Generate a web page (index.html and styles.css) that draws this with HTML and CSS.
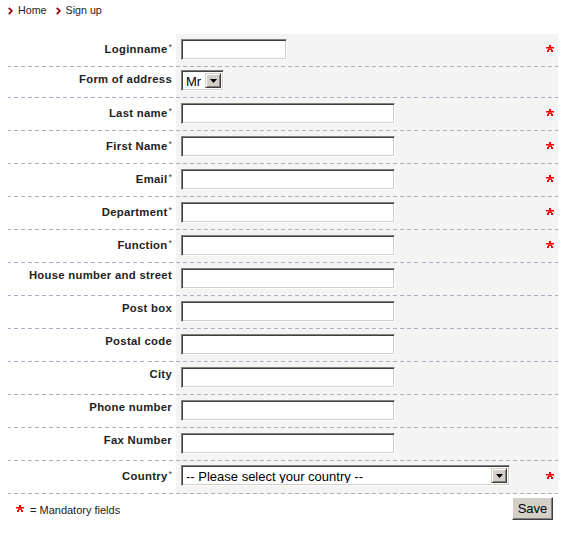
FILE: index.html
```html
<!DOCTYPE html>
<html lang="en">
<head>
<meta charset="utf-8">
<title>Sign up</title>
<link rel="stylesheet" href="styles.css">
</head>
<body>
<div class="page">
  <nav class="crumbs">
    <span class="crumb"><svg class="chev" width="5" height="8" viewBox="0 0 5 8"><path d="M0.8 0.8 L3.8 4 L0.8 7.2" fill="none" stroke="#9b0000" stroke-width="1.8"/></svg>Home</span>
    <span class="crumb"><svg class="chev" width="5" height="8" viewBox="0 0 5 8"><path d="M0.8 0.8 L3.8 4 L0.8 7.2" fill="none" stroke="#9b0000" stroke-width="1.8"/></svg>Sign up</span>
  </nav>

  <form class="form">
    <div class="row">
      <label class="label req">Loginname<span class="sup">*</span></label>
      <div class="field"><input class="text w-short" type="text"></div>
      <span class="star"><svg width="8" height="7" viewBox="0 0 8 7"><g fill="#ff0000"><rect x="3" y="0" width="2" height="2"/><rect x="0" y="2" width="8" height="1.5"/><rect x="2" y="3.5" width="4" height="1.5"/><rect x="1" y="5" width="2" height="2"/><rect x="5" y="5" width="2" height="2"/></g></svg></span>
    </div>
    <div class="row row-select">
      <label class="label">Form of address</label>
      <div class="field"><div class="select w-mr"><span class="sel-text">Mr</span><span class="sel-btn"><svg width="7" height="4" viewBox="0 0 7 4"><path d="M0 0 H7 L3.5 4 Z" fill="#000"/></svg></span></div></div>
      <span class="star"></span>
    </div>
    <div class="row">
      <label class="label req">Last name<span class="sup">*</span></label>
      <div class="field"><input class="text" type="text"></div>
      <span class="star"><svg width="8" height="7" viewBox="0 0 8 7"><g fill="#ff0000"><rect x="3" y="0" width="2" height="2"/><rect x="0" y="2" width="8" height="1.5"/><rect x="2" y="3.5" width="4" height="1.5"/><rect x="1" y="5" width="2" height="2"/><rect x="5" y="5" width="2" height="2"/></g></svg></span>
    </div>
    <div class="row">
      <label class="label req">First Name<span class="sup">*</span></label>
      <div class="field"><input class="text" type="text"></div>
      <span class="star"><svg width="8" height="7" viewBox="0 0 8 7"><g fill="#ff0000"><rect x="3" y="0" width="2" height="2"/><rect x="0" y="2" width="8" height="1.5"/><rect x="2" y="3.5" width="4" height="1.5"/><rect x="1" y="5" width="2" height="2"/><rect x="5" y="5" width="2" height="2"/></g></svg></span>
    </div>
    <div class="row">
      <label class="label req">Email<span class="sup">*</span></label>
      <div class="field"><input class="text" type="text"></div>
      <span class="star"><svg width="8" height="7" viewBox="0 0 8 7"><g fill="#ff0000"><rect x="3" y="0" width="2" height="2"/><rect x="0" y="2" width="8" height="1.5"/><rect x="2" y="3.5" width="4" height="1.5"/><rect x="1" y="5" width="2" height="2"/><rect x="5" y="5" width="2" height="2"/></g></svg></span>
    </div>
    <div class="row">
      <label class="label req">Department<span class="sup">*</span></label>
      <div class="field"><input class="text" type="text"></div>
      <span class="star"><svg width="8" height="7" viewBox="0 0 8 7"><g fill="#ff0000"><rect x="3" y="0" width="2" height="2"/><rect x="0" y="2" width="8" height="1.5"/><rect x="2" y="3.5" width="4" height="1.5"/><rect x="1" y="5" width="2" height="2"/><rect x="5" y="5" width="2" height="2"/></g></svg></span>
    </div>
    <div class="row">
      <label class="label req">Function<span class="sup">*</span></label>
      <div class="field"><input class="text" type="text"></div>
      <span class="star"><svg width="8" height="7" viewBox="0 0 8 7"><g fill="#ff0000"><rect x="3" y="0" width="2" height="2"/><rect x="0" y="2" width="8" height="1.5"/><rect x="2" y="3.5" width="4" height="1.5"/><rect x="1" y="5" width="2" height="2"/><rect x="5" y="5" width="2" height="2"/></g></svg></span>
    </div>
    <div class="row">
      <label class="label">House number and street</label>
      <div class="field"><input class="text" type="text"></div>
      <span class="star"></span>
    </div>
    <div class="row">
      <label class="label">Post box</label>
      <div class="field"><input class="text" type="text"></div>
      <span class="star"></span>
    </div>
    <div class="row">
      <label class="label">Postal code</label>
      <div class="field"><input class="text" type="text"></div>
      <span class="star"></span>
    </div>
    <div class="row">
      <label class="label">City</label>
      <div class="field"><input class="text" type="text"></div>
      <span class="star"></span>
    </div>
    <div class="row">
      <label class="label">Phone number</label>
      <div class="field"><input class="text" type="text"></div>
      <span class="star"></span>
    </div>
    <div class="row">
      <label class="label">Fax Number</label>
      <div class="field"><input class="text" type="text"></div>
      <span class="star"></span>
    </div>
    <div class="row row-country">
      <label class="label req">Country<span class="sup">*</span></label>
      <div class="field"><div class="select w-country"><span class="sel-text">-- Please select your country --</span><span class="sel-btn"><svg width="7" height="4" viewBox="0 0 7 4"><path d="M0 0 H7 L3.5 4 Z" fill="#000"/></svg></span></div></div>
      <span class="star"><svg width="8" height="7" viewBox="0 0 8 7"><g fill="#ff0000"><rect x="3" y="0" width="2" height="2"/><rect x="0" y="2" width="8" height="1.5"/><rect x="2" y="3.5" width="4" height="1.5"/><rect x="1" y="5" width="2" height="2"/><rect x="5" y="5" width="2" height="2"/></g></svg></span>
    </div>

    <div class="footer">
      <div class="legend"><svg class="legend-star" width="8" height="7" viewBox="0 0 8 7"><g fill="#ff0000"><rect x="3" y="0" width="2" height="2"/><rect x="0" y="2" width="8" height="1.5"/><rect x="2" y="3.5" width="4" height="1.5"/><rect x="1" y="5" width="2" height="2"/><rect x="5" y="5" width="2" height="2"/></g></svg><span>= Mandatory fields</span></div>
      <button class="btn" type="button">Save</button>
    </div>
  </form>
</div>
</body>
</html>
```

FILE: styles.css
```css
* { box-sizing: border-box; }

body {
  margin: 0;
  background: #ffffff;
  font-family: "Liberation Sans", Arial, sans-serif;
  font-size: 11px;
  color: #222222;
}

.page {
  padding: 4px 12px 0 8px;
}

.crumbs {
  display: flex;
  gap: 9px;
  line-height: 13px;
  height: 13px;
  margin-bottom: 17px;
  font-size: 10.7px;
}

.crumb {
  display: flex;
  align-items: center;
  gap: 5px;
}

.chev { display: block; margin-top: 1px; }

.form {
  display: flex;
  flex-direction: column;
}

.row {
  display: grid;
  grid-template-columns: 168px 1fr auto;
  height: 33px;
  border-bottom: 1px solid transparent;
  border-image: repeating-linear-gradient(to right, #aeaec4 0 4px, transparent 4px 7px) 1;
  background: linear-gradient(to right, #ffffff 168px, #f4f4f4 168px);
}

.row-select { height: 31px; }

.label {
  font-weight: bold;
  font-size: 11.3px;
  letter-spacing: 0.3px;
  text-align: right;
  padding: 6px 4px 0 0;
  line-height: 13px;
  color: #222222;
}

.label.req { padding-top: 9px; }

.sup {
  font-weight: normal;
  font-size: 9px;
  letter-spacing: 0;
  vertical-align: 3px;
  line-height: 0;
  margin-left: 1px;
  color: #444444;
}

.field {
  padding: 5px 0 0 5px;
}

.row-select .field { padding-top: 3px; }
.row-country .field { padding-top: 4px; }

.star {
  align-self: center;
  width: 12px;
  padding-right: 4px;
  margin-top: -3px;
  display: flex;
  justify-content: flex-end;
}
.star svg { display: block; }

.text {
  display: block;
  width: 214px;
  height: 21px;
  margin: 0;
  padding: 0 3px;
  background: #ffffff;
  border: 1px solid;
  border-color: #808080 #ffffff #ffffff #808080;
  box-shadow: inset 1px 1px 0 #404040, inset -1px -1px 0 #d4d0c8;
  font-family: "Liberation Sans", Arial, sans-serif;
  font-size: 13px;
  outline: none;
}

.w-short { width: 106px; }

.select {
  display: flex;
  align-items: stretch;
  height: 21px;
  background: #ffffff;
  border: 1px solid;
  border-color: #808080 #ffffff #ffffff #808080;
  box-shadow: inset 1px 1px 0 #404040, inset -1px -1px 0 #d4d0c8;
  padding: 2px;
  font-family: "Liberation Sans", Arial, sans-serif;
  font-size: 13px;
  color: #000000;
}

.w-mr { width: 43px; }
.w-country { width: 329px; }

.sel-text {
  flex: 1;
  line-height: 17px;
  padding-left: 2px;
  white-space: nowrap;
  overflow: hidden;
}

.sel-btn {
  width: 16px;
  display: flex;
  align-items: center;
  justify-content: center;
  background: #d4d0c8;
  border: 1px solid;
  border-color: #d4d0c8 #404040 #404040 #d4d0c8;
  box-shadow: inset 1px 1px 0 #ffffff, inset -1px -1px 0 #808080;
}
.sel-btn svg { display: block; }

.footer {
  display: flex;
  justify-content: space-between;
  align-items: flex-start;
  padding: 3px 5px 0 0;
}

.legend {
  display: flex;
  align-items: center;
  gap: 6px;
  padding: 7px 0 0 8px;
  line-height: 13px;
}

.legend-star { display: block; margin-top: -5px; }

.btn {
  width: 41px;
  height: 23px;
  padding: 0;
  margin: 0;
  background: #d4d0c8;
  border: 1px solid;
  border-color: #ffffff #404040 #404040 #ffffff;
  box-shadow: inset -1px -1px 0 #808080;
  font-family: "Liberation Sans", Arial, sans-serif;
  font-size: 13px;
  color: #000000;
}
```
